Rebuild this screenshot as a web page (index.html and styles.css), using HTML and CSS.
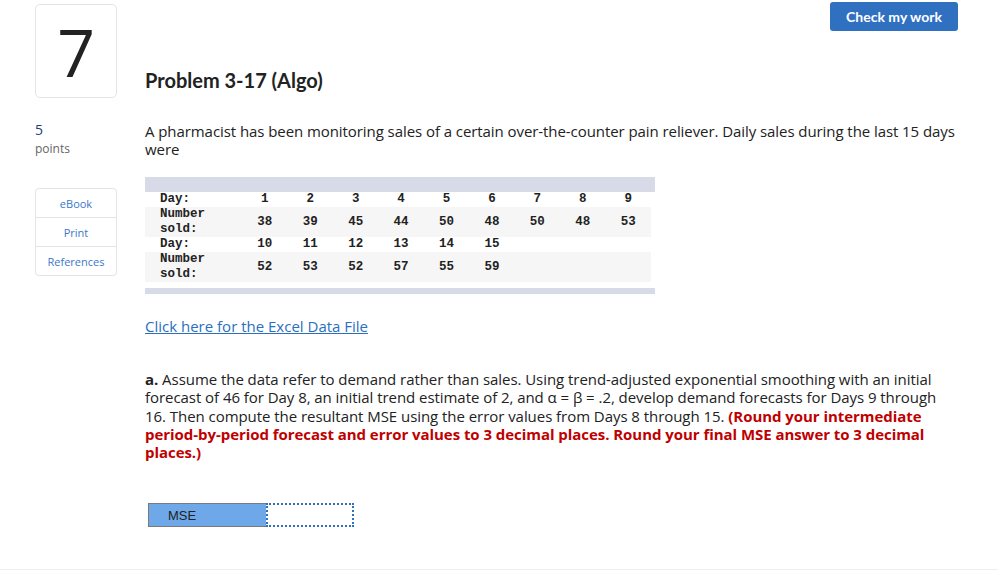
FILE: index.html
```html
<!DOCTYPE html>
<html>
<head>
<meta charset="utf-8">
<link rel="stylesheet" href="styles.css">
</head>
<body>
<div class="page">
  <aside class="side">
    <div class="qnum">7</div>
    <div class="points"><span class="pts-num">5</span><span class="pts-label">points</span></div>
    <nav class="tools">
      <a class="tool">eBook</a>
      <a class="tool">Print</a>
      <a class="tool">References</a>
    </nav>
  </aside>
  <main class="main">
    <div class="topbar"><button class="check">Check my work</button></div>
    <h1 class="title">Problem 3-17 (Algo)</h1>
    <p class="intro">A pharmacist has been monitoring sales of a certain over-the-counter pain reliever. Daily sales during the last 15 days were</p>
    <div class="data">
      <table class="grid">
        <tr class="day"><td class="lbl">Day:</td><td>1</td><td>2</td><td>3</td><td>4</td><td>5</td><td>6</td><td>7</td><td>8</td><td>9</td></tr>
        <tr class="num"><td class="lbl">Number sold:</td><td>38</td><td>39</td><td>45</td><td>44</td><td>50</td><td>48</td><td>50</td><td>48</td><td>53</td></tr>
        <tr class="day"><td class="lbl">Day:</td><td>10</td><td>11</td><td>12</td><td>13</td><td>14</td><td>15</td><td></td><td></td><td></td></tr>
        <tr class="num"><td class="lbl">Number sold:</td><td>52</td><td>53</td><td>52</td><td>57</td><td>55</td><td>59</td><td></td><td></td><td></td></tr>
      </table>
    </div>
    <a class="excel">Click here for the Excel Data File</a>
    <p class="question"><b>a.</b> Assume the data refer to demand rather than sales. Using trend-adjusted exponential smoothing with an initial forecast of 46 for Day 8, an initial trend estimate of 2, and α = β = .2, develop demand forecasts for Days 9 through 16. Then compute the resultant MSE using the error values from Days 8 through 15. <strong class="red">(Round your intermediate period-by-period forecast and error values to 3 decimal places. Round your final MSE answer to 3 decimal places.)</strong></p>
    <div class="answer">
      <div class="ans-label">MSE</div>
      <div class="ans-input"></div>
    </div>
  </main>
</div>
<div class="footer-line"></div>
</body>
</html>
```

FILE: styles.css
```css
html, body {
  margin: 0;
  padding: 0;
  background: #fff;
}
body {
  font-family: "Open Sans", Lato, sans-serif;
  color: #222;
  width: 998px;
  height: 571px;
  overflow: hidden;
  position: relative;
}
.page {
  display: flex;
  padding-left: 35px;
  gap: 28px;
  height: 568px;
}
.side {
  width: 82px;
  display: flex;
  flex-direction: column;
}
.qnum {
  margin-top: 4px;
  height: 92px;
  border: 1px solid #e4e4e4;
  border-radius: 5px;
  display: flex;
  align-items: center;
  justify-content: center;
  font-family: "Open Sans", sans-serif;
  font-size: 66px;
  font-weight: 400;
  color: #222;
  line-height: 1;
}
.points {
  margin-top: 24px;
  display: flex;
  flex-direction: column;
}
.pts-num {
  font-size: 14px;
  color: #1d3f7a;
  line-height: 16px;
}
.pts-label {
  font-size: 12px;
  color: #666;
  line-height: 16px;
  margin-top: 3px;
}
.tools {
  margin-top: 31px;
  border: 1px solid #e4e4e4;
  border-radius: 4px;
  display: flex;
  flex-direction: column;
}
.tool {
  height: 28px;
  display: flex;
  align-items: center;
  justify-content: center;
  font-size: 11px;
  color: #3a78c9;
  border-top: 1px solid #e4e4e4;
}
.tool:first-child {
  border-top: none;
}
.main {
  width: 815px;
  display: flex;
  flex-direction: column;
}
.topbar {
  display: flex;
  justify-content: flex-end;
  padding-top: 2px;
  margin-right: 2px;
}
.check {
  width: 128px;
  height: 29px;
  border: none;
  border-radius: 3px;
  background: #2f70c1;
  color: #fff;
  font-family: Lato, "Open Sans", sans-serif;
  font-weight: 700;
  font-size: 14px;
  padding: 0;
}
.title {
  margin: 37px 0 0 0;
  font-family: Lato, "Open Sans", sans-serif;
  font-size: 20px;
  line-height: 24px;
  font-weight: 700;
  color: #222;
}
.intro {
  margin: 30px 0 0 0;
  font-size: 15px;
  line-height: 18px;
  letter-spacing: -0.07px;
}
.data {
  margin-top: 19px;
  width: 510px;
  border-top: 15px solid #d7dbe7;
  border-bottom: 6px solid #d7dbe7;
  padding-bottom: 6px;
}
.grid {
  border-collapse: collapse;
  font-family: "Liberation Mono", "Courier New", monospace;
  font-size: 12.5px;
  font-weight: 700;
  line-height: 15px;
  color: #222;
  table-layout: fixed;
  width: 506px;
}
.grid td {
  padding: 0;
  text-align: center;
  vertical-align: middle;
  width: 45.4px;
}
.grid td.lbl {
  text-align: left;
  padding-left: 15px;
  width: 82px;
}
.grid tr.day td {
  height: 15px;
  background: #fff;
}
.grid tr.num td {
  height: 30px;
  background: #f6f6f6;
}
.excel {
  margin-top: 23px;
  font-size: 15px;
  line-height: 18px;
  color: #2a6fc0;
  text-decoration: underline;
  align-self: flex-start;
}
.question {
  margin: 35px 0 0 0;
  font-size: 15px;
  line-height: 18.3px;
  letter-spacing: -0.05px;
}
.question b {
  font-weight: 700;
}
.red {
  color: #c00000;
  font-weight: 700;
}
.answer {
  margin-top: 42px;
  margin-left: 3px;
  display: flex;
  height: 24px;
}
.ans-label {
  width: 118px;
  background: #6ea8e9;
  border: 1px solid #7a7a7a;
  border-right: none;
  box-sizing: border-box;
  font-family: "Liberation Sans", Arial, sans-serif;
  font-size: 13px;
  color: #222;
  padding-left: 19px;
  display: flex;
  align-items: center;
}
.ans-input {
  width: 88px;
  border: 2px dotted #2f70c1;
  box-sizing: border-box;
  background: #fff;
}
.footer-line {
  position: absolute;
  left: 0;
  right: 0;
  bottom: 1px;
  height: 1px;
  background: #eeeeee;
}
```
